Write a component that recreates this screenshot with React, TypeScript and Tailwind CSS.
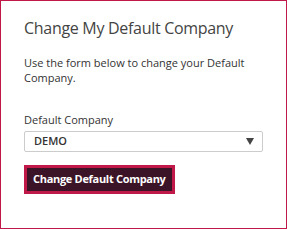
export default function App() {
  return (
    <div className="w-[287px] h-[229px] border border-[#c1184a] bg-white box-border pl-[23px] pr-[24px] pt-[17px]" style={{ fontFamily: '"Open Sans", sans-serif' }}>
      <h1 className="text-[16px] leading-[20px] text-[#444] font-medium tracking-[-0.3px]">Change My Default Company</h1>
      <p className="mt-[17px] text-[11px] leading-[15px] text-[#333] font-medium">Use the form below to change your Default Company.</p>
      <label className="block mt-[27px] text-[11px] leading-[15px] text-[#333] font-medium">Default Company</label>
      <div className="mt-[4px] w-[239px] h-[21px] border border-[#cccccc] rounded-[2px] flex items-center justify-between pl-[9px] pr-[8px]">
        <span className="text-[11px] text-[#333] font-semibold">DEMO</span>
        <svg width="8" height="7" viewBox="0 0 8 7"><path d="M0 0h8L4 7z" fill="#444" /></svg>
      </div>
      <button className="mt-[13px] h-[29px] px-[6px] border-[3px] border-[#c1184a] bg-[#3c1428] text-white text-[11px] font-bold tracking-[-0.3px] flex items-center">Change Default Company</button>
    </div>
  );
}
